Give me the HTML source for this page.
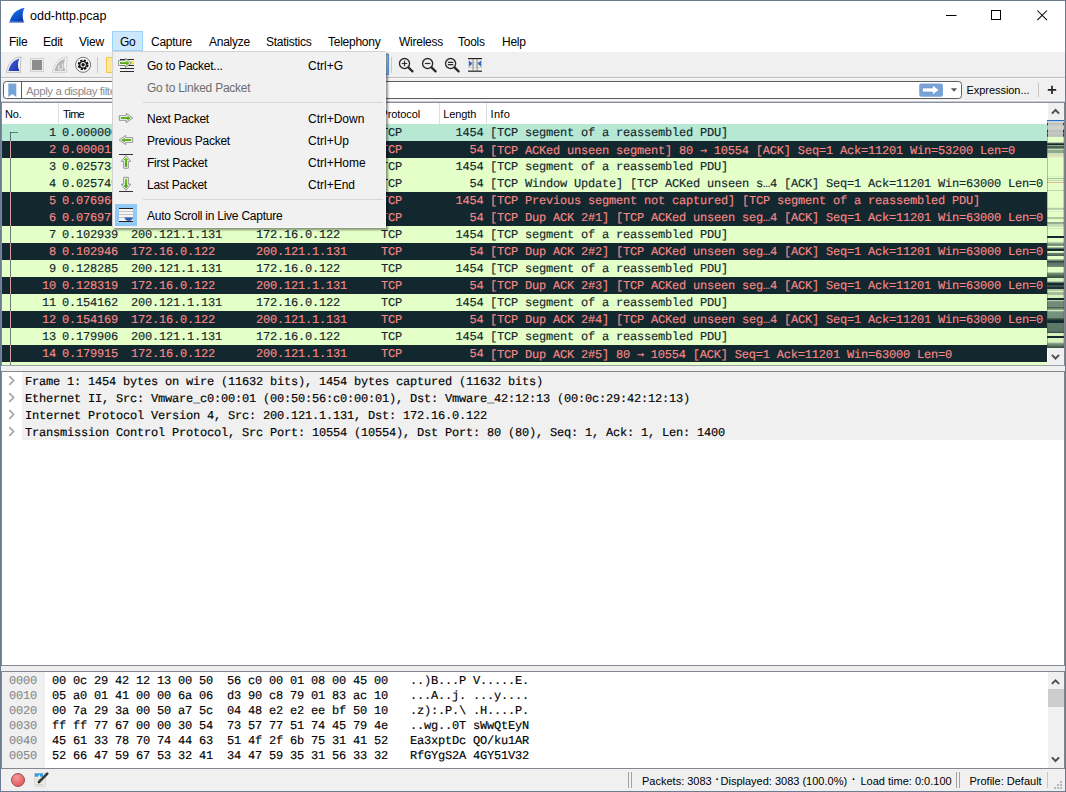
<!DOCTYPE html>
<html lang="en"><head><meta charset="utf-8"><title>odd-http.pcap</title>
<style>
*{box-sizing:border-box;margin:0;padding:0}
html,body{width:1066px;height:792px;overflow:hidden;background:#f0f0f0}
body{position:relative;font-family:"Liberation Sans",sans-serif;font-size:12px;color:#000}
.abs{position:absolute}
#win{position:absolute;left:0;top:0;width:1066px;height:792px;border:1px solid #6b7b90;pointer-events:none;z-index:50}
#title{position:absolute;left:1px;top:1px;width:1064px;height:30px;background:#fff}
#title .t{position:absolute;left:29px;top:8px;font-size:12.5px;line-height:14px;color:#000}
#menubar{position:absolute;left:1px;top:31px;width:1064px;height:21px;background:#fff}
#menubar span{position:absolute;top:4px;line-height:15px;font-size:12px;letter-spacing:-0.25px;white-space:nowrap}
#gohl{position:absolute;left:112px;top:31px;width:31px;height:20px;background:#cce8ff;border:1px solid #99d1ff}
#toolbar{position:absolute;left:1px;top:52px;width:1064px;height:25px;background:#f0f0f0}
#tbline1{position:absolute;left:1px;top:77px;width:1064px;height:1px;background:#bcbcbc}
#tbline2{position:absolute;left:1px;top:78px;width:1064px;height:1px;background:#fcfcfc}
#filter{position:absolute;left:3px;top:81px;width:959px;height:18px;background:#fff;border:1px solid #5e5e5e;border-radius:3.5px}
#filter .div{position:absolute;left:17px;top:0;width:1px;height:16px;background:#5a5a5a}
#filter .ph{position:absolute;left:22px;top:2px;font-size:11.5px;letter-spacing:-0.42px;line-height:15px;color:#8c8c8c;white-space:nowrap}
/* packet list */
#plist{position:absolute;left:1px;top:102px;width:1064px;height:264px;background:#fff;border:1px solid #828790;border-top-color:#8a909c;border-bottom-color:#9aa0aa}
#phead{position:absolute;left:2px;top:103px;width:1045px;height:21px;background:#fff}
#phead span{position:absolute;top:4px;font-size:11px;line-height:14px;letter-spacing:-0.1px}
#phead i{position:absolute;top:0;width:1px;height:21px;background:#dedede}
.row{position:absolute;left:2px;width:1045px;height:17px;font-family:"Liberation Mono","DejaVu Sans Mono",monospace;font-size:12px;letter-spacing:-0.2px;text-rendering:geometricPrecision;-webkit-text-stroke:0.15px;line-height:17px;white-space:pre;overflow:hidden}
.row.ok{background:#e4ffc7;color:#12272e}
.row.sel{background:#b6e8d3;color:#12272e}
.row.bad{background:#12272e;color:#f78787}
.row .c{position:absolute;top:1px;height:17px}
.row .vl{position:absolute;left:8px;top:0;width:1px;height:17px;background:currentColor;opacity:.6}
.row.bad .vl{opacity:.85;background:#f8b4b4}
.row .hl{position:absolute;left:8px;top:8px;width:8px;height:1px;background:currentColor;opacity:.55}
.row .no{left:0;width:54px;text-align:right}
.row .tm{left:60px}
.row .src{left:129px}
.row .dst{left:254px}
.row .pr{left:379px}
.row .ln{left:440px;width:41.5px;text-align:right}
.row .inf{left:488px}
/* detail */
#detail{position:absolute;left:1px;top:371px;width:1064px;height:295px;background:#fff;border:1px solid #828790}
.drow{position:absolute;left:22px;width:1042px;height:17px;background:#f0f0f0;font-family:"Liberation Mono","DejaVu Sans Mono",monospace;font-size:12px;letter-spacing:-0.2px;text-rendering:geometricPrecision;-webkit-text-stroke:0.15px;line-height:17px;white-space:pre;color:#000}
.drow span{position:absolute;left:3px;top:2px}
.drow .chev{position:absolute;left:-14px;top:3px}
/* hex */
#hex{position:absolute;left:1px;top:671px;width:1064px;height:98px;background:#fff;border:1px solid #828790}
#hexoff{position:absolute;left:2px;top:672px;width:43px;height:96px;background:#f0f0f0}
.hrow{position:absolute;left:2px;width:1040px;height:15px;font-family:"Liberation Mono","DejaVu Sans Mono",monospace;font-size:12px;letter-spacing:-0.2px;text-rendering:geometricPrecision;-webkit-text-stroke:0.15px;line-height:15px;white-space:pre;color:#000}
.hrow span{position:absolute;top:0}
.hrow .off{left:7px;color:#8c8c8c}
.hrow .hb{left:50px}
.hrow .ha{left:408px}
/* status */
#status{position:absolute;left:1px;top:769px;width:1064px;height:22px;background:#f0f0f0}
#status span{position:absolute;top:5px;font-size:11px;line-height:14px;white-space:nowrap}
#status i{position:absolute;top:3px;width:1px;height:16px;background:#a3a3a3}
/* scrollbars */
.sb{position:absolute;background:#f0f0f0}
/* popup */
#popup{position:absolute;left:112px;top:51px;width:274px;height:177px;background:#f1f1f1;border:1px solid #d2d2d2;border-right-color:#f7f7f7;border-bottom-color:#f7f7f7;box-shadow:2px 2px 2px rgba(0,0,0,0.42);z-index:20}
#popup .mi{position:absolute;left:34px;font-size:12px;letter-spacing:-0.250px;line-height:15px;white-space:nowrap;color:#000}
#popup .sc{position:absolute;left:195px;font-size:12px;line-height:15px;white-space:nowrap;color:#000}
#popup .dis{color:#6d6d6d}
#popup .sep{position:absolute;left:30px;width:240px;height:1px;background:#d7d7d7}
#popup svg{position:absolute}
#pl99{position:absolute;left:1px;top:100px;width:1064px;height:1px;background:#fafafa}
#pl101{position:absolute;left:1px;top:101px;width:1064px;height:1px;background:#c6c9ce}
.ar{font-family:"DejaVu Sans Mono","Liberation Mono",monospace;letter-spacing:-0.424px;-webkit-text-stroke:0}

</style></head><body>
<div id="title">
<svg class="abs" style="left:8px;top:6px" width="17" height="17" viewBox="0 0 17 17"><defs><linearGradient id="fg" x1="0.2" y1="0" x2="0.9" y2="1"><stop offset="0" stop-color="#1f7cf0"/><stop offset="0.6" stop-color="#0d4fc8"/><stop offset="1" stop-color="#0a2f96"/></linearGradient></defs><path d="M0.5 15.5 C2 8 7 2 15.5 1 C13 6 13.5 11 15 15.5 Z" fill="url(#fg)"/><rect x="0.3" y="14.6" width="15" height="1.2" fill="#7f9fd8"/></svg>
<span class="t">odd-http.pcap</span>
<svg class="abs" style="left:940px;top:0" width="125" height="30" viewBox="0 0 125 30"><path d="M5 14.500h10.500" stroke="#000" stroke-width="1" fill="none"/><rect x="50.500" y="9.500" width="9" height="9" fill="none" stroke="#000" stroke-width="1"/><path d="M96.300 9.500l9.700 9.700M106 9.500l-9.700 9.700" stroke="#000" stroke-width="1.050" fill="none"/></svg>
</div>
<div id="menubar">
<span style="left:8px">File</span><span style="left:42px">Edit</span><span style="left:78px">View</span><span style="left:150px">Capture</span><span style="left:208px">Analyze</span><span style="left:265px">Statistics</span><span style="left:327px">Telephony</span><span style="left:398px">Wireless</span><span style="left:457px">Tools</span><span style="left:501px">Help</span>
</div>
<div id="gohl"></div>
<div id="menubar2" class="abs" style="left:120px;top:35px;font-size:12px;line-height:15px;letter-spacing:-0.250px">Go</div>
<div id="toolbar">
<svg class="abs" style="left:0;top:0" width="1064" height="25" viewBox="1 52 1064 25">
<defs>
<linearGradient id="bf" x1="0" y1="0" x2="1" y2="1"><stop offset="0" stop-color="#4766dc"/><stop offset="1" stop-color="#1a2fb0"/></linearGradient>
<linearGradient id="chk" x1="0" y1="0" x2="0" y2="1"><stop offset="0" stop-color="#d6e9fa"/><stop offset="1" stop-color="#9cc6ee"/></linearGradient>
</defs>
<!-- start capture fin -->
<path d="M6.300 72.300 C7.800 65.300 11.500 59.300 17.500 57.400 L21.600 57.300 C20.300 59.500 20.300 68 20.500 72.300 Z" fill="#fafafa" stroke="#b6b6b6" stroke-width="0.900"/>
<path d="M8.400 71 C9.600 65.300 12.600 60.400 19.300 58.400 C17.500 62.600 17.600 67 19.400 71 Z" fill="url(#bf)"/>
<!-- stop -->
<rect x="30.500" y="58.500" width="13" height="13" fill="#ededed" stroke="#d2d2d2" stroke-width="1"/>
<rect x="32" y="60" width="10" height="10" fill="#8c8c8c"/>
<!-- restart fin grey -->
<path d="M52.300 72.300 C53.800 65.300 57.500 59.300 63.500 57.400 L67.600 57.300 C66.300 59.500 66.300 68 66.500 72.300 Z" fill="#f6f6f6" stroke="#cdcdcd" stroke-width="0.900"/>
<path d="M54.400 71 C55.600 65.300 58.600 60.400 65.300 58.400 C63.500 62.600 63.600 67 65.400 71 Z" fill="#b7b7b7"/>
<path d="M62.600 63.500 v4 a2.100 2.100 0 1 1 -2.900 -1.900" fill="none" stroke="#ececec" stroke-width="1.200"/>
<!-- options gear -->
<circle cx="83.100" cy="64.800" r="7.500" fill="#fff" stroke="#3a3a3a" stroke-width="0.700"/>
<circle cx="83.100" cy="64.800" r="4.300" fill="none" stroke="#111" stroke-width="2.300" stroke-dasharray="2.200 1.180"/>
<circle cx="83.100" cy="64.800" r="3.900" fill="#111"/>
<circle cx="83.100" cy="64.800" r="2.700" fill="#fff"/>
<circle cx="83.100" cy="64.800" r="1.700" fill="#111"/>
<!-- separator -->
<rect x="97" y="57" width="1" height="16" fill="#c9c9c9"/>
<!-- folder (mostly hidden) -->
<rect x="106.500" y="57.500" width="12" height="15" fill="#ffe796" stroke="#f1c852" stroke-width="1"/>
<!-- checked colorize button -->
<rect x="366.500" y="54.500" width="22" height="20" fill="url(#chk)" stroke="#5c9fe6" stroke-width="1"/>
<rect x="391" y="57" width="1" height="16" fill="#c9c9c9"/>
<!-- zoom in -->
<g fill="none" stroke="#2b2b2b" stroke-linecap="round">
<circle cx="404.500" cy="63.500" r="5.050" stroke-width="1.350"/><path d="M408.600 67.700 L412.500 71.400" stroke-width="2.300"/><path d="M401.800 63.500h5.400M404.500 60.800v5.400" stroke-width="1.200" stroke-linecap="butt"/>
<circle cx="427.600" cy="63.500" r="5.050" stroke-width="1.350"/><path d="M431.700 67.700 L435.600 71.400" stroke-width="2.300"/><path d="M424.900 63.500h5.400" stroke-width="1.200" stroke-linecap="butt"/>
<circle cx="450.600" cy="63.500" r="5.050" stroke-width="1.350"/><path d="M454.700 67.700 L458.600 71.400" stroke-width="2.300"/><path d="M447.900 62.300h5.400M447.900 64.700h5.400" stroke-width="1.200" stroke-linecap="butt"/>
</g>
<!-- resize columns -->
<g>
<rect x="468" y="58" width="14" height="1.200" fill="#222"/><rect x="468" y="70.600" width="14" height="1.200" fill="#222"/>
<rect x="468" y="62" width="14" height="0.800" fill="#c8c8c0"/><rect x="468" y="64.500" width="14" height="0.800" fill="#c8c8c0"/><rect x="468" y="67" width="14" height="0.800" fill="#c8c8c0"/>
<rect x="472.500" y="59" width="1" height="12" fill="#8a8a80"/><rect x="476.600" y="59" width="1" height="12" fill="#8a8a80"/>
<path d="M468.800 60.300 L472.600 63.500 L468.800 66.900 Z" fill="#3b6fc4"/><path d="M481.300 60.300 L477.500 63.500 L481.300 66.900 Z" fill="#3b6fc4"/>
</g>
</svg>
</div>
<div id="tbline1"></div><div id="tbline2"></div>
<div id="filter"><div class="div"></div>
<svg class="abs" style="left:4px;top:1px" width="9" height="15" viewBox="0 0 9 15"><defs><linearGradient id="bm" x1="0" y1="0" x2="0" y2="1"><stop offset="0" stop-color="#7ea6d9"/><stop offset="1" stop-color="#6f9fdc"/></linearGradient></defs><path d="M0.300 0.500 H8.300 V14 L4.300 11 L0.300 14 Z" fill="url(#bm)"/></svg>
<span class="ph">Apply a display filter</span>
<svg class="abs" style="left:914px;top:0" width="44" height="16" viewBox="918 82 44 16"><rect x="919.200" y="83.400" width="23.800" height="13.300" rx="2" fill="#79a3d7"/><path d="M922.500 88 H932.500 V85 L939 90 L932.500 95 V92 H922.500 Z" fill="#fff" stroke="#5f8fcc" stroke-width="0.600"/><path d="M950.800 88.300 H957.200 L954 91.700 Z" fill="#5a5a5a"/></svg>
</div>
<span class="abs" id="expr" style="left:966.500px;top:83px;font-size:11px;line-height:14px;letter-spacing:-0.050px">Expression...</span>
<div class="abs" style="left:1038px;top:83px;width:1px;height:14px;background:#c4c4c4"></div>
<svg class="abs" style="left:1046px;top:84px" width="12" height="12" viewBox="0 0 12 12"><path d="M1.800 5.900h8.400M6 1.700v8.400" stroke="#222" stroke-width="1.700" fill="none"/></svg>
<div id="pl99"></div><div id="pl101"></div>
<div id="plist"></div>
<div id="phead">
<span style="left:3px">No.</span><span style="left:61px;letter-spacing:-0.800px">Time</span><span style="left:129px">Source</span><span style="left:254px">Destination</span><span style="left:378.500px">Protocol</span><span style="left:441.300px">Length</span><span style="left:488.600px;letter-spacing:0.300px">Info</span>
<i style="left:56px"></i><i style="left:125px"></i><i style="left:250px"></i><i style="left:375px"></i><i style="left:437px"></i><i style="left:484px"></i>
</div>
<div class="row sel" style="top:124px"><b class="vl" style="top:8px;height:9px"></b><b class="hl"></b><span class="c no">1</span><span class="c tm">0.000000</span><span class="c src">200.121.1.131</span><span class="c dst">172.16.0.122</span><span class="c pr">TCP</span><span class="c ln">1454</span><span class="c inf">[TCP segment of a reassembled PDU]</span></div>
<div class="row bad" style="top:141px"><b class="vl"></b><span class="c no">2</span><span class="c tm">0.000011</span><span class="c src">172.16.0.122</span><span class="c dst">200.121.1.131</span><span class="c pr">TCP</span><span class="c ln">54</span><span class="c inf">[TCP ACKed unseen segment] 80 <span class="ar">→</span> 10554 [ACK] Seq=1 Ack=11201 Win=53200 Len=0</span></div>
<div class="row ok" style="top:158px"><b class="vl"></b><span class="c no">3</span><span class="c tm">0.025738</span><span class="c src">200.121.1.131</span><span class="c dst">172.16.0.122</span><span class="c pr">TCP</span><span class="c ln">1454</span><span class="c inf">[TCP segment of a reassembled PDU]</span></div>
<div class="row ok" style="top:175px"><b class="vl"></b><span class="c no">4</span><span class="c tm">0.025749</span><span class="c src">172.16.0.122</span><span class="c dst">200.121.1.131</span><span class="c pr">TCP</span><span class="c ln">54</span><span class="c inf">[TCP Window Update] [TCP ACKed unseen s…4 [ACK] Seq=1 Ack=11201 Win=63000 Len=0</span></div>
<div class="row bad" style="top:192px"><b class="vl"></b><span class="c no">5</span><span class="c tm">0.076966</span><span class="c src">200.121.1.131</span><span class="c dst">172.16.0.122</span><span class="c pr">TCP</span><span class="c ln">1454</span><span class="c inf">[TCP Previous segment not captured] [TCP segment of a reassembled PDU]</span></div>
<div class="row bad" style="top:209px"><b class="vl"></b><span class="c no">6</span><span class="c tm">0.076977</span><span class="c src">172.16.0.122</span><span class="c dst">200.121.1.131</span><span class="c pr">TCP</span><span class="c ln">54</span><span class="c inf">[TCP Dup ACK 2#1] [TCP ACKed unseen seg…4 [ACK] Seq=1 Ack=11201 Win=63000 Len=0</span></div>
<div class="row ok" style="top:226px"><b class="vl"></b><span class="c no">7</span><span class="c tm">0.102939</span><span class="c src">200.121.1.131</span><span class="c dst">172.16.0.122</span><span class="c pr">TCP</span><span class="c ln">1454</span><span class="c inf">[TCP segment of a reassembled PDU]</span></div>
<div class="row bad" style="top:243px"><b class="vl"></b><span class="c no">8</span><span class="c tm">0.102946</span><span class="c src">172.16.0.122</span><span class="c dst">200.121.1.131</span><span class="c pr">TCP</span><span class="c ln">54</span><span class="c inf">[TCP Dup ACK 2#2] [TCP ACKed unseen seg…4 [ACK] Seq=1 Ack=11201 Win=63000 Len=0</span></div>
<div class="row ok" style="top:260px"><b class="vl"></b><span class="c no">9</span><span class="c tm">0.128285</span><span class="c src">200.121.1.131</span><span class="c dst">172.16.0.122</span><span class="c pr">TCP</span><span class="c ln">1454</span><span class="c inf">[TCP segment of a reassembled PDU]</span></div>
<div class="row bad" style="top:277px"><b class="vl"></b><span class="c no">10</span><span class="c tm">0.128319</span><span class="c src">172.16.0.122</span><span class="c dst">200.121.1.131</span><span class="c pr">TCP</span><span class="c ln">54</span><span class="c inf">[TCP Dup ACK 2#3] [TCP ACKed unseen seg…4 [ACK] Seq=1 Ack=11201 Win=63000 Len=0</span></div>
<div class="row ok" style="top:294px"><b class="vl"></b><span class="c no">11</span><span class="c tm">0.154162</span><span class="c src">200.121.1.131</span><span class="c dst">172.16.0.122</span><span class="c pr">TCP</span><span class="c ln">1454</span><span class="c inf">[TCP segment of a reassembled PDU]</span></div>
<div class="row bad" style="top:311px"><b class="vl"></b><span class="c no">12</span><span class="c tm">0.154169</span><span class="c src">172.16.0.122</span><span class="c dst">200.121.1.131</span><span class="c pr">TCP</span><span class="c ln">54</span><span class="c inf">[TCP Dup ACK 2#4] [TCP ACKed unseen seg…4 [ACK] Seq=1 Ack=11201 Win=63000 Len=0</span></div>
<div class="row ok" style="top:328px"><b class="vl"></b><span class="c no">13</span><span class="c tm">0.179906</span><span class="c src">200.121.1.131</span><span class="c dst">172.16.0.122</span><span class="c pr">TCP</span><span class="c ln">1454</span><span class="c inf">[TCP segment of a reassembled PDU]</span></div>
<div class="row bad" style="top:345px"><b class="vl"></b><span class="c no">14</span><span class="c tm">0.179915</span><span class="c src">172.16.0.122</span><span class="c dst">200.121.1.131</span><span class="c pr">TCP</span><span class="c ln">54</span><span class="c inf">[TCP Dup ACK 2#5] 80 <span class="ar">→</span> 10554 [ACK] Seq=1 Ack=11201 Win=63000 Len=0</span></div>
<div class="row ok" style="top:362px;height:3px"><b class="vl" style="height:3px"></b></div>
<div id="detail"></div>
<div class="drow" style="top:372px"><svg class="chev" width="8" height="11" viewBox="0 0 8 11"><path d="M1.300 1.200 L5.600 5.500 L1.300 9.800" fill="none" stroke="#a6a6a6" stroke-width="1.700"/></svg><span>Frame 1: 1454 bytes on wire (11632 bits), 1454 bytes captured (11632 bits)</span></div>
<div class="drow" style="top:389px"><svg class="chev" width="8" height="11" viewBox="0 0 8 11"><path d="M1.300 1.200 L5.600 5.500 L1.300 9.800" fill="none" stroke="#a6a6a6" stroke-width="1.700"/></svg><span>Ethernet II, Src: Vmware_c0:00:01 (00:50:56:c0:00:01), Dst: Vmware_42:12:13 (00:0c:29:42:12:13)</span></div>
<div class="drow" style="top:406px"><svg class="chev" width="8" height="11" viewBox="0 0 8 11"><path d="M1.300 1.200 L5.600 5.500 L1.300 9.800" fill="none" stroke="#a6a6a6" stroke-width="1.700"/></svg><span>Internet Protocol Version 4, Src: 200.121.1.131, Dst: 172.16.0.122</span></div>
<div class="drow" style="top:423px"><svg class="chev" width="8" height="11" viewBox="0 0 8 11"><path d="M1.300 1.200 L5.600 5.500 L1.300 9.800" fill="none" stroke="#a6a6a6" stroke-width="1.700"/></svg><span>Transmission Control Protocol, Src Port: 10554 (10554), Dst Port: 80 (80), Seq: 1, Ack: 1, Len: 1400</span></div>
<div id="hex"></div>
<div id="hexoff"></div>
<div class="hrow" style="top:674px"><span class="off">0000</span><span class="hb">00 0c 29 42 12 13 00 50  56 c0 00 01 08 00 45 00</span><span class="ha">..)B...P V.....E.</span></div>
<div class="hrow" style="top:689px"><span class="off">0010</span><span class="hb">05 a0 01 41 00 00 6a 06  d3 90 c8 79 01 83 ac 10</span><span class="ha">...A..j. ...y....</span></div>
<div class="hrow" style="top:704px"><span class="off">0020</span><span class="hb">00 7a 29 3a 00 50 a7 5c  04 48 e2 e2 ee bf 50 10</span><span class="ha">.z):.P.\ .H....P.</span></div>
<div class="hrow" style="top:719px"><span class="off">0030</span><span class="hb">ff ff 77 67 00 00 30 54  73 57 77 51 74 45 79 4e</span><span class="ha">..wg..0T sWwQtEyN</span></div>
<div class="hrow" style="top:734px"><span class="off">0040</span><span class="hb">45 61 33 78 70 74 44 63  51 4f 2f 6b 75 31 41 52</span><span class="ha">Ea3xptDc QO/ku1AR</span></div>
<div class="hrow" style="top:749px"><span class="off">0050</span><span class="hb">52 66 47 59 67 53 32 41  34 47 59 35 31 56 33 32</span><span class="ha">RfGYgS2A 4GY51V32</span></div>
<div id="sb1" class="sb" style="left:1048px;top:103px;width:16px;height:262px"></div>
<div id="mini" class="abs" style="left:1047px;top:120px;width:17px;height:228px;background:linear-gradient(to bottom,#e4ffc7 0.00%,#e4ffc7 1.14%,#2a3f3c 1.32%,#2a3f3c 2.28%,#e4ffc7 2.46%,#e4ffc7 3.95%,#3a5045 4.47%,#12272e 4.65%,#12272e 5.35%,#6f8872 5.53%,#6f8872 5.96%,#2a3f3c 6.14%,#2a3f3c 7.19%,#e4ffc7 7.37%,#e4ffc7 7.46%,#e4ffc7 9.52%,#8fa58c 10.09%,#12272e 10.44%,#12272e 10.88%,#d0e8b8 11.06%,#4a6355 11.32%,#4a6355 12.42%,#c5dcb0 12.64%,#c5dcb0 13.16%,#8fa590 13.29%,#93a993 14.48%,#c8dfb6 14.65%,#cfe6bb 15.53%,#ecdcb8 15.62%,#ecdcb8 16.32%,#e4ffc7 16.50%,#e4ffc7 24.39%,#a9bfa0 24.57%,#e4ffc7 24.83%,#e4ffc7 25.57%,#7e957f 25.71%,#e4ffc7 26.01%,#e4ffc7 26.32%,#a9bfa0 26.45%,#e4ffc7 26.67%,#e4ffc7 27.20%,#e6b894 27.28%,#e6b894 27.64%,#e4ffc7 27.72%,#e4ffc7 30.84%,#a9bfa0 30.97%,#e4ffc7 31.23%,#e4ffc7 38.34%,#b5cba5 38.51%,#b5cba5 39.21%,#e4ffc7 39.39%,#e4ffc7 39.83%,#a9bfa0 39.92%,#e4ffc7 40.18%,#e4ffc7 42.37%,#b0c8a0 42.55%,#b0c8a0 43.42%,#e4ffc7 43.60%,#f0dcb8 43.78%,#e4ffc7 44.04%,#e4ffc7 44.87%,#6a8070 45.00%,#8aa088 45.31%,#c0d8b0 45.62%,#cbe3b8 46.93%,#e4ffc7 47.11%,#e4ffc7 47.55%,#a9bfa0 47.68%,#e4ffc7 47.90%,#e4ffc7 50.79%,#12272e 50.97%,#12272e 51.71%,#e4ffc7 51.85%,#e4ffc7 53.25%,#a0b898 53.95%,#5a7560 55.00%,#e4ffc7 55.18%,#e4ffc7 55.49%,#7d957d 56.14%,#12272e 56.76%,#12272e 57.24%,#e4ffc7 57.37%,#e4ffc7 58.07%,#6f8872 58.34%,#4a6355 59.43%,#e4ffc7 59.61%,#e4ffc7 60.71%,#8aa288 61.41%,#3a5045 62.02%,#12272e 62.28%,#55705f 62.55%,#6d8873 64.30%,#e4ffc7 64.48%,#e4ffc7 66.67%,#7d957d 67.11%,#3f5a4a 68.69%,#3a5045 69.30%,#d8f0c0 69.48%,#d8f0c0 70.62%,#5f7a66 71.28%,#12272e 71.71%,#12272e 72.15%,#3a5045 72.37%,#3a5045 73.25%,#1c3038 73.42%,#1c3038 73.95%,#b0c8a0 74.13%,#b0c8a0 75.00%,#dcf4c2 75.18%,#dcf4c2 75.44%,#a5bd9b 75.57%,#a5bd9b 76.58%,#d8f0c0 76.76%,#d8f0c0 77.90%,#12272e 78.07%,#12272e 78.82%,#c0d8b0 78.95%,#a8c09e 79.48%,#6f8a75 79.65%,#748f79 82.11%,#3a5045 82.28%,#3a5045 82.59%,#8aa288 82.72%,#8aa288 83.25%,#d0e8b8 83.34%,#d0e8b8 83.86%,#7a957f 84.04%,#728d78 86.93%,#3a5045 87.11%,#2a3f3c 87.81%,#12272e 87.99%,#12272e 89.04%,#5f7a68 89.21%,#5a7563 92.72%,#3a5045 92.90%,#3a5045 93.42%,#d8f0c0 93.56%,#d8f0c0 94.52%,#12272e 94.70%,#12272e 95.40%,#d8f0c0 95.57%,#d8f0c0 97.37%,#8aa288 98.03%,#3f5a4a 99.57%,#3a5045 100.00%)"></div>
<div class="abs" style="left:1047px;top:120px;width:1px;height:228px;background:rgba(60,80,70,.35)"></div>
<div class="abs" style="left:1063px;top:120px;width:1px;height:228px;background:rgba(60,80,70,.25)"></div>
<div class="abs" style="left:1047px;top:120px;width:17px;height:1px;background:#1f6fd6"></div>
<div class="abs" style="left:1048px;top:121px;width:15px;height:16px;background:rgba(205,205,203,.92)"></div>
<svg class="abs" style="left:1047px;top:103px" width="17" height="17" viewBox="0 0 17 17"><path d="M4.900 10.600 L8.500 7 L12.100 10.600" fill="none" stroke="#505050" stroke-width="2"/></svg>
<svg class="abs" style="left:1047px;top:348px" width="17" height="17" viewBox="0 0 17 17"><path d="M4.900 6.900 L8.500 10.500 L12.100 6.900" fill="none" stroke="#505050" stroke-width="2"/></svg>
<div id="sb3" class="sb" style="left:1048px;top:672px;width:16px;height:96px"></div>
<div class="abs" style="left:1048px;top:689px;width:16px;height:18px;background:#cdcdcd"></div>
<svg class="abs" style="left:1048px;top:672px" width="16" height="17" viewBox="0 0 16 17"><path d="M3.900 11.900 L7.500 8.300 L11.100 11.900" fill="none" stroke="#505050" stroke-width="2"/></svg>
<svg class="abs" style="left:1048px;top:751px" width="16" height="17" viewBox="0 0 16 17"><path d="M3.900 6.400 L7.500 10 L11.100 6.400" fill="none" stroke="#505050" stroke-width="2"/></svg>
<div id="status">
<svg class="abs" style="left:8px;top:2px" width="44" height="18" viewBox="9 771 44 18">
<defs><radialGradient id="rd" cx="0.4" cy="0.3" r="0.8"><stop offset="0" stop-color="#f29a9a"/><stop offset="1" stop-color="#e05058"/></radialGradient></defs>
<circle cx="18" cy="780" r="6.500" fill="url(#rd)" stroke="#8e3535" stroke-width="0.800"/>
<rect x="34.500" y="773.200" width="11" height="13.300" fill="#ecece6" stroke="#cfcfc8" stroke-width="0.600"/>
<rect x="34.800" y="773.400" width="8.200" height="3.300" fill="#2f9be0"/>
<path d="M38 776.800 L39.300 774.200 L40.200 776.800Z" fill="#fff"/>
<path d="M36.500 779.500h5M36.500 782h4M36.500 784.500h6.500" stroke="#c4c4c0" stroke-width="0.800"/>
<path d="M47.300 773.600 L39 782" stroke="#3a3a3a" stroke-width="2.600" stroke-linecap="round"/>
<path d="M38.200 783 L38.900 781 L40 782.200Z" fill="#111"/>
</svg>
<i style="left:627px"></i><i style="left:630px"></i>
<span style="left:641px">Packets: 3083</span><span style="left:714.500px;top:3px;font-weight:bold">&#183;</span><span style="left:719.500px">Displayed: 3083 (100.0%)</span><span style="left:851px;top:3px;font-weight:bold">&#183;</span><span style="left:859.500px">Load time: 0:0.100</span>
<i style="left:955px"></i><i style="left:958px"></i>
<span style="left:968.500px">Profile: Default</span>
<i style="left:1046px;background:#c8c8c8"></i>
<svg class="abs" style="left:1051px;top:10px" width="12" height="12" viewBox="0 0 12 12"><g fill="#b8b8b8"><rect x="8" y="2" width="2" height="2"/><rect x="5" y="5" width="2" height="2"/><rect x="8" y="5" width="2" height="2"/><rect x="2" y="8" width="2" height="2"/><rect x="5" y="8" width="2" height="2"/><rect x="8" y="8" width="2" height="2"/></g></svg>
</div>
<div id="popup">
<svg style="left:0;top:0" width="30" height="176" viewBox="113 52 30 176">
<defs><linearGradient id="gr" x1="0" y1="0" x2="0" y2="1"><stop offset="0" stop-color="#7cc626"/><stop offset="1" stop-color="#3f9a12"/></linearGradient></defs>
<!-- go to packet -->
<rect x="129" y="61.300" width="5" height="3" fill="#f7e23c"/>
<path d="M120 59.500h14M120 65.500h14M120 68.500h14M120 71.500h14" stroke="#2a2a2a" stroke-width="1" fill="none"/>
<path d="M118.500 60.600 H125.300 V58.300 L131.300 63 L125.300 67.600 V65.400 H118.500 Z" fill="#fff" stroke="#777" stroke-width="0.800"/>
<path d="M120 61.900 H126 V60.400 L129.700 63 L126 65.600 V64.100 H120 Z" fill="url(#gr)"/>
<!-- next -->
<path d="M119.300 115.700 H126.300 V113.400 L132.800 118 L126.300 122.600 V120.300 H119.300 Z" fill="#fff" stroke="#777" stroke-width="0.800"/>
<path d="M120.800 116.900 H127.300 V115.400 L131 118 L127.300 120.600 V119.100 H120.800 Z" fill="url(#gr)"/>
<!-- previous -->
<path d="M132.700 137.700 H125.700 V135.400 L119.200 140 L125.700 144.600 V142.300 H132.700 Z" fill="#fff" stroke="#777" stroke-width="0.800"/>
<path d="M131.200 138.900 H124.700 V137.400 L121 140 L124.700 142.600 V141.100 H131.200 Z" fill="url(#gr)"/>
<!-- first -->
<path d="M119 154.500h14" stroke="#333" stroke-width="1"/>
<path d="M123.700 168.200 V161.300 H121.300 L126 155.500 L130.700 161.300 H128.300 V168.200 Z" fill="#fff" stroke="#777" stroke-width="0.800"/>
<path d="M124.900 166.800 V160.300 H123.400 L126 157.200 L128.600 160.300 H127.100 V166.800 Z" fill="url(#gr)"/>
<!-- last -->
<path d="M119 191.500h14" stroke="#333" stroke-width="1"/>
<path d="M123.700 177.300 V184.200 H121.300 L126 190.300 L130.700 184.200 H128.300 V177.300 Z" fill="#fff" stroke="#777" stroke-width="0.800"/>
<path d="M124.900 178.700 V185.200 H123.400 L126 188.600 L128.600 185.200 H127.100 V178.700 Z" fill="url(#gr)"/>
<!-- auto scroll (checked) -->
<rect x="115" y="204" width="22" height="22" fill="#91c9f7"/>
<rect x="119" y="208" width="14" height="14" fill="#f4f4f4"/>
<path d="M119 208.500h14M119 221.500h14" stroke="#222" stroke-width="1"/>
<path d="M119 211.500h14M119 214.500h14M119 217.500h14" stroke="#b8b8b0" stroke-width="0.800"/>
<path d="M124.500 217.600 H133 C132.500 220 131 221 128.800 221 C126.500 221 125 220 124.500 217.600 Z" fill="#2d5fb3"/>
</svg>
<span class="mi" style="top:7px">Go to Packet...</span><span class="sc" style="top:7px">Ctrl+G</span>
<span class="mi dis" style="top:29px">Go to Linked Packet</span>
<div class="sep" style="top:50px"></div>
<span class="mi" style="top:60px">Next Packet</span><span class="sc" style="top:60px">Ctrl+Down</span>
<span class="mi" style="top:82px">Previous Packet</span><span class="sc" style="top:82px">Ctrl+Up</span>
<span class="mi" style="top:104px">First Packet</span><span class="sc" style="top:104px">Ctrl+Home</span>
<span class="mi" style="top:126px">Last Packet</span><span class="sc" style="top:126px">Ctrl+End</span>
<div class="sep" style="top:147px"></div>
<span class="mi" style="top:157px">Auto Scroll in Live Capture</span>
</div>
<div id="win"></div>
</body></html>
